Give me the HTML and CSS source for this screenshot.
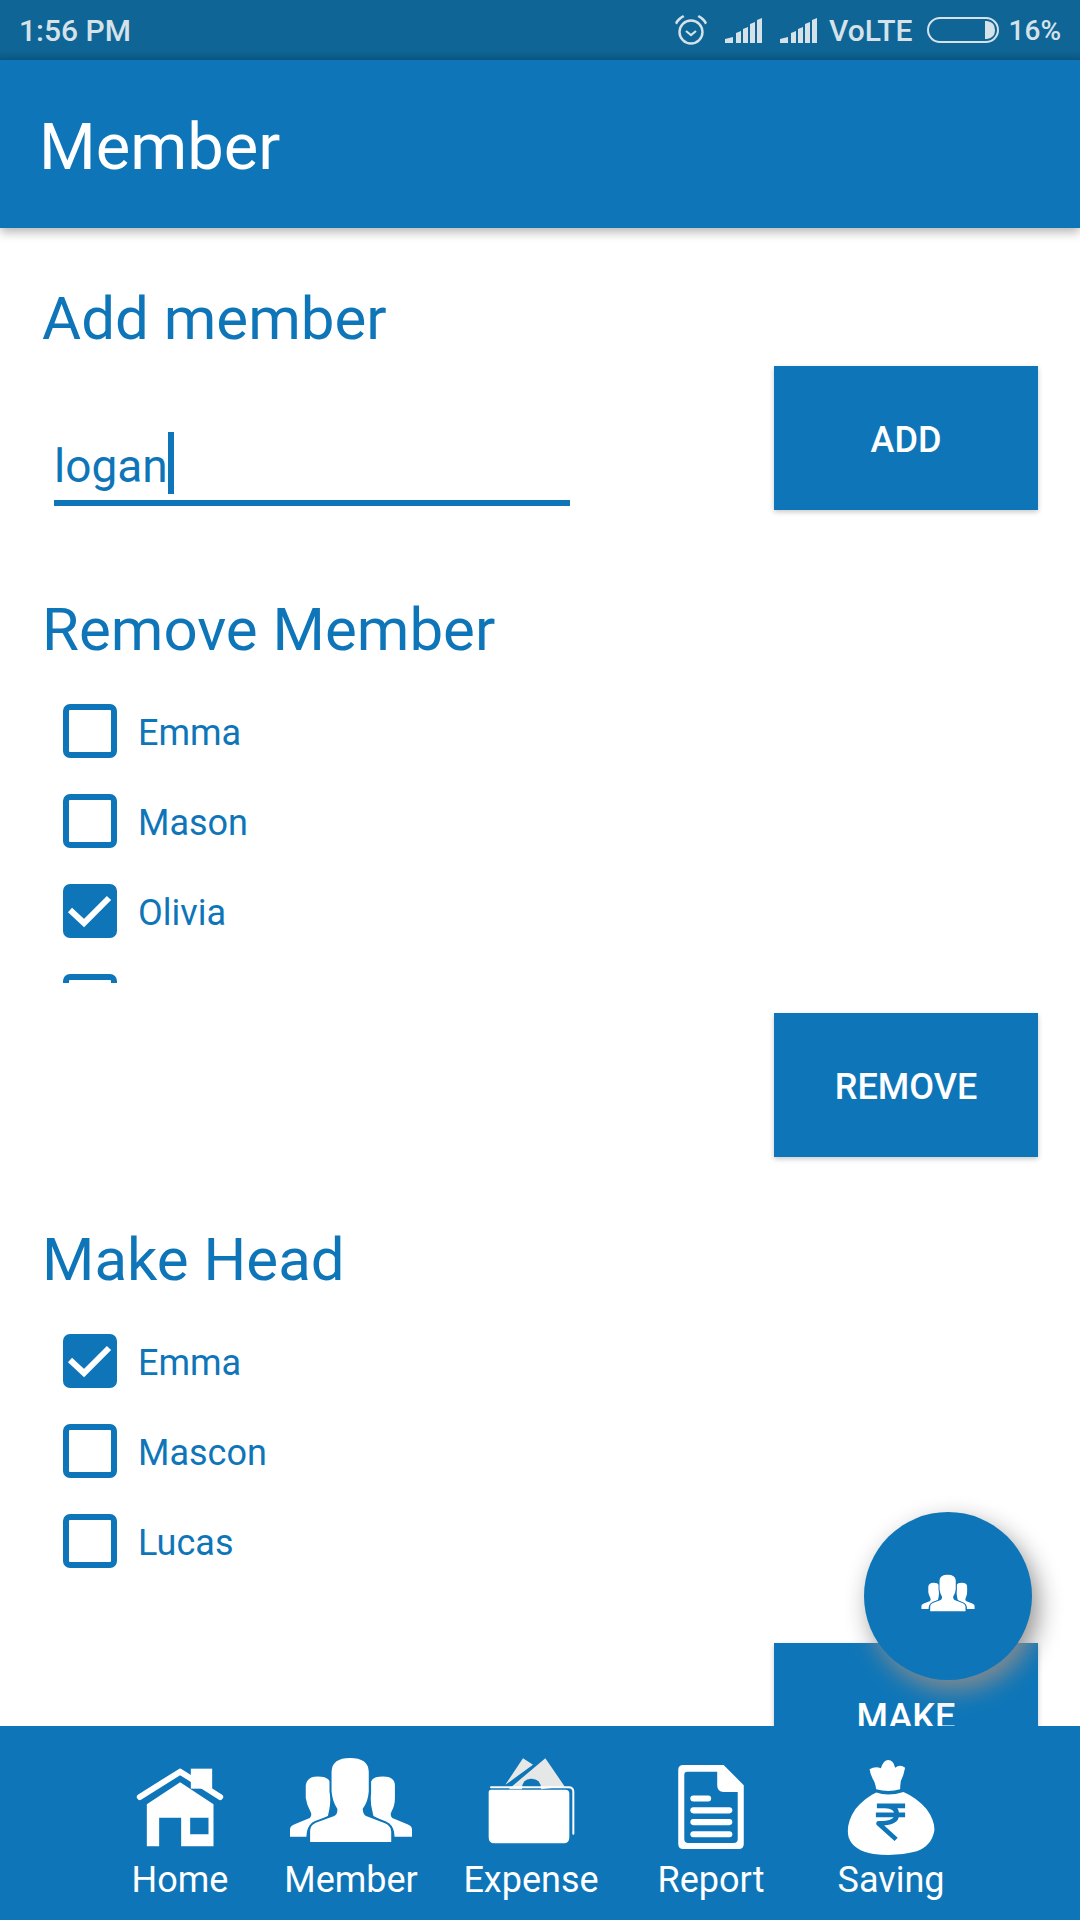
FILE: index.html
```html
<!DOCTYPE html>
<html lang="en">
<head>
<meta charset="utf-8">
<title>Member</title>
<link rel="stylesheet" href="styles.css">
</head>
<body>
<svg class="defs" width="0" height="0" aria-hidden="true">
  <symbol id="people" viewBox="570 85 370 250">
    <path fill="#fff" d="M573 320V298Q573 288 585 283L632 264Q640 256 634 244Q624 228 620 205V165Q625 140 655 140Q685 140 692 155V190Q695 215 690 240L686 258L640 280Q622 290 622 320Z"/>
    <path fill="#fff" d="M937 320V298Q937 288 925 283L878 264Q870 256 876 244Q886 228 886 205V165Q885 140 850 140Q820 140 815 155V190Q812 215 818 240L822 258L865 280Q885 290 885 320Z"/>
    <path fill="#fff" stroke="#0e76b8" stroke-width="12" paint-order="stroke" d="M633 335V302Q633 286 650 278L705 258Q716 252 714 236Q700 216 697 185V125Q699 85 752 85Q806 85 808 125V185Q806 216 790 236Q790 252 800 258L858 280Q875 288 875 305V335Z"/>
  </symbol>
</svg>
<div class="screen">
  <header class="status">
    <span class="time">1:56 PM</span>
    <div class="status-right">
      <svg class="ic-alarm" viewBox="0 0 34 32"><circle cx="17" cy="18" r="11.5" fill="none" stroke="#d5e2ea" stroke-width="2.4"/><path d="M12 17l5 4 5-4" fill="none" stroke="#d5e2ea" stroke-width="2.2"/><path d="M1 9Q3 4 9 1L10.500 3Q5 6 3 10.500ZM33 9Q31 4 25 1L23.500 3Q29 6 31 10.500Z" fill="#d5e2ea"/></svg>
      <svg class="ic-signal" viewBox="0 0 37 25"><path fill="#d5e2ea" d="M0 25V21L8 19V25ZM11 25V15L16 13V25ZM18 25V11L23 9V25ZM25 25V6L30 4V25ZM32 25V2L37 0V25Z"/></svg>
      <svg class="ic-signal" viewBox="0 0 37 25"><path fill="#d5e2ea" d="M0 25V21L8 19V25ZM11 25V15L16 13V25ZM18 25V11L23 9V25ZM25 25V6L30 4V25ZM32 25V2L37 0V25Z"/></svg>
      <span class="volte">VoLTE</span>
      <svg class="ic-battery" viewBox="0 0 72 26"><rect x="1" y="1" width="70" height="24" rx="12" fill="none" stroke="#d5e2ea" stroke-width="2"/><path d="M58 4H60Q68 5 68 13Q68 21 60 22H58Z" fill="#d5e2ea"/></svg>
      <span class="percent">16%</span>
    </div>
  </header>
  <div class="appbar">Member</div>
  <main class="content">
    <section class="add">
      <h2 class="heading">Add member</h2>
      <div class="add-row">
        <div class="field"><span>logan</span><i class="caret"></i></div>
        <button class="btn" type="button">ADD</button>
      </div>
    </section>
    <section class="remove">
      <h2 class="heading">Remove Member</h2>
      <ul class="list list-clip">
        <li class="row"><span class="box"></span><span class="label">Emma</span></li>
        <li class="row"><span class="box"></span><span class="label">Mason</span></li>
        <li class="row"><span class="box on"><svg viewBox="0 0 54 54"><path d="M7 26L21 39L46 14" fill="none" stroke="#fff" stroke-width="6"/></svg></span><span class="label">Olivia</span></li>
        <li class="row"><span class="box"></span></li>
      </ul>
      <div class="actions"><button class="btn" type="button">REMOVE</button></div>
    </section>
    <section class="head">
      <h2 class="heading">Make Head</h2>
      <ul class="list">
        <li class="row"><span class="box on"><svg viewBox="0 0 54 54"><path d="M7 26L21 39L46 14" fill="none" stroke="#fff" stroke-width="6"/></svg></span><span class="label">Emma</span></li>
        <li class="row"><span class="box"></span><span class="label">Mascon</span></li>
        <li class="row"><span class="box"></span><span class="label">Lucas</span></li>
      </ul>
      <div class="actions actions-make"><button class="btn" type="button">MAKE</button></div>
    </section>
  </main>
  <button class="fab" type="button" aria-label="Members"><svg class="fab-icon"><use href="#people"/></svg></button>
  <nav class="nav">
    <div class="tab">
      <svg class="ic ic-home" viewBox="108 113 263 237"><path fill="#fff" d="M272 115H336V175H272Z"/><path fill="none" stroke="#fff" stroke-width="18" stroke-linecap="round" stroke-linejoin="round" d="M119 200L240 124L360 200"/><path fill="#fff" fill-rule="evenodd" d="M140 222L240 156L340 222V348H243V262H177V348H140ZM270 262V312H325V262Z"/></svg>
      <span>Home</span>
    </div>
    <div class="tab">
      <svg class="ic ic-member"><use href="#people"/></svg>
      <span>Member</span>
    </div>
    <div class="tab">
      <svg class="ic ic-expense" viewBox="1163 85 261 257"><path fill="#e6e8e8" d="M1268 85L1298 105L1215 165ZM1335 85L1393 170L1322 178Q1322 147 1293 147Q1265 147 1265 178H1225Z"/><path fill="none" stroke="#fff" stroke-width="6" stroke-linecap="round" d="M1172 172H1405Q1419 172 1419 186V312"/><path fill="#fff" d="M1165 188Q1165 178 1175 180H1395Q1407 180 1407 192V322Q1407 340 1390 340H1182Q1165 340 1165 322Z"/></svg>
      <span>Expense</span>
    </div>
    <div class="tab">
      <svg class="ic ic-report" viewBox="295 105 195 250"><path fill="#fff" fill-rule="evenodd" d="M310 105H430L490 165V340Q490 355 475 355H310Q295 355 295 340V120Q295 105 310 105ZM322 125Q313 125 313 134V325Q313 337 325 337H460Q472 337 472 325V185H430Q411 185 411 165V125Z"/><rect fill="#fff" x="331" y="196" width="62" height="18" rx="9"/><rect fill="#fff" x="331" y="231" width="125" height="18" rx="9"/><rect fill="#fff" x="331" y="266" width="125" height="18" rx="9"/><rect fill="#fff" x="331" y="302" width="125" height="18" rx="9"/></svg>
      <span>Report</span>
    </div>
    <div class="tab">
      <svg class="ic ic-saving" viewBox="800 85 265 290"><path fill="#fff" d="M868 115Q885 105 902 112Q910 87 924 87Q940 88 945 110Q960 98 975 110Q970 135 962 150Q960 165 960 175Q925 185 888 175Q885 155 878 145Q870 130 868 115Z"/><path fill="#fff" d="M888 185Q925 198 970 183Q1010 200 1040 235Q1065 270 1063 300Q1055 345 1010 362Q950 378 880 370Q820 360 805 320Q795 280 825 235Q855 200 888 185Z"/><path fill="none" stroke="#0e76b8" stroke-width="14" stroke-linejoin="round" d="M890 225H975M887 252H975M915 225Q950 225 950 252Q950 278 895 278L948 326"/></svg>
      <span>Saving</span>
    </div>
  </nav>
</div>
</body>
</html>
```
FILE: styles.css
```css
* { box-sizing: border-box; }
html, body { margin: 0; padding: 0; }
body { font-family: Roboto, "Liberation Sans", sans-serif; background: #fff; color: #0e76b8; }
.defs { position: absolute; }
.screen { position: relative; width: 1080px; height: 1920px; display: flex; flex-direction: column; overflow: hidden; }

.status { flex: 0 0 60px; display: flex; align-items: center; justify-content: space-between; padding: 0 19px; background: linear-gradient(to bottom, #0f6595 0, #0f6595 50px, #0b5a87 60px); color: #d5e2ea; font-weight: 500; font-size: 30px; }
.status-right { display: flex; align-items: center; }
.ic-alarm { width: 34px; height: 32px; margin-right: 17px; }
.ic-signal { width: 37px; height: 25px; margin-right: 18px; }
.ic-signal + .volte { margin-left: -6px; }
.volte { margin-right: 14px; }
.ic-battery { width: 72px; height: 26px; margin-right: 10px; }
.percent { font-size: 28px; }

.appbar { flex: 0 0 168px; position: relative; z-index: 2; display: flex; align-items: center; padding: 6px 0 0 39px; background: #0e76b8; color: #fff; font-size: 65px; box-shadow: 0 4px 10px rgba(0, 0, 0, .3); }

.content { flex: 1 1 0; min-height: 0; overflow: hidden; }
.heading { margin: 0 0 0 42px; font-size: 60px; font-weight: 400; line-height: 66px; }
.add { padding-top: 58px; }
.add-row { display: flex; justify-content: space-between; align-items: flex-start; margin-top: 14px; padding: 0 42px 0 54px; }
.field { width: 516px; height: 140px; padding-bottom: 6px; display: flex; align-items: flex-end; border-bottom: 6px solid #0e76b8; font-size: 46px; line-height: 56px; }
.caret { width: 6px; height: 62px; background: #0e76b8; margin-left: 0; }

.btn { display: block; width: 264px; height: 144px; border: 0; padding: 4px 0 0; background: #0e76b8; color: #fff; font: 500 36px Roboto, sans-serif; box-shadow: 0 2px 5px rgba(0, 0, 0, .22); }
.actions { display: flex; justify-content: flex-end; padding-right: 42px; margin-top: 30px; }
.actions-make { margin-top: 57px; }

.remove { margin-top: 87px; }
.head { margin-top: 70px; }
.list { list-style: none; margin: 23px 0 0; padding: 0 0 0 63px; }
.list-clip { height: 297px; overflow: hidden; }
.row { height: 90px; display: flex; align-items: center; gap: 21px; font-size: 36px; }
.label { margin-top: 4px; }
.box { flex: 0 0 54px; width: 54px; height: 54px; border: 6px solid #0e76b8; border-radius: 7px; position: relative; }
.box.on { background: #0e76b8; }
.box svg { position: absolute; left: -6px; top: -6px; width: 54px; height: 54px; display: block; }

.fab { position: absolute; left: 864px; top: 1512px; z-index: 3; width: 168px; height: 168px; border: 0; padding: 0; border-radius: 50%; background: #0e76b8; box-shadow: 6px 10px 24px rgba(140, 140, 140, .95); display: flex; align-items: center; justify-content: center; }
.fab-icon { width: 54px; height: 38px; margin-bottom: 6px; }

.nav { flex: 0 0 194px; position: relative; z-index: 4; display: grid; grid-template-columns: 162px repeat(4, 180px); padding-left: 99px; background: #0e76b8; color: #fff; font-size: 36px; }
.tab { position: relative; display: flex; flex-direction: column; align-items: center; }
.tab span { position: absolute; top: 133px; line-height: 42px; white-space: nowrap; }
.ic { display: block; }
.ic-home { width: 88px; height: 79px; margin-top: 42px; }
.ic-member { width: 124px; height: 84px; margin-top: 32px; }
.ic-expense { width: 87px; height: 86px; margin-top: 32px; }
.ic-report { width: 66px; height: 84px; margin-top: 39px; }
.ic-saving { width: 88px; height: 97px; margin-top: 33px; }
```
